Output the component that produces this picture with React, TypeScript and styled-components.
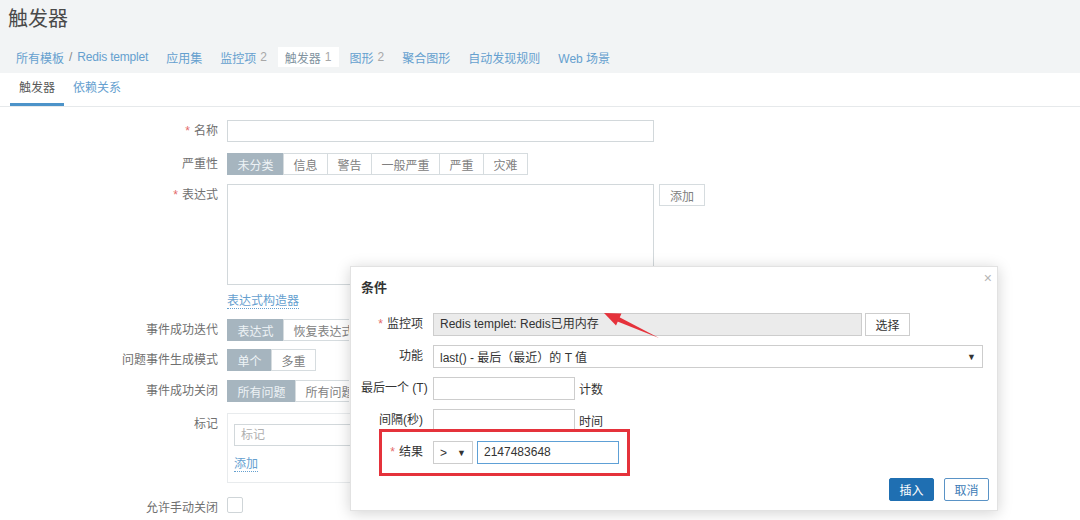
import React from 'react'
import styled, { createGlobalStyle } from 'styled-components'

const GlobalStyle = createGlobalStyle`
  html, body {
    margin: 0;
    padding: 0;
    background: #fff;
  }
  body {
    font-family: "Liberation Sans", "Noto Sans CJK SC", sans-serif;
    font-size: 12px;
    color: #707070;
  }
  * {
    box-sizing: border-box;
  }
`

const Page = styled.div`
  position: relative;
  width: 1080px;
  height: 520px;
  overflow: hidden;
  background: #fff;
`

const Header = styled.div`
  background: #f2f4f5;
`

const Title = styled.h1`
  margin: 0;
  height: 40px;
  padding-left: 8px;
  line-height: 38px;
  font-size: 20px;
  font-weight: normal;
  color: #4a4a4a;
`

const Nav = styled.div`
  display: flex;
  align-items: center;
  gap: 4px;
  padding: 7px 0 6px 9px;
`

const NavItem = styled.a<{ $active?: boolean }>`
  display: flex;
  align-items: center;
  height: 20px;
  padding: 0 7px;
  color: ${(p) => (p.$active ? '#8193a0' : '#65a0cf')};
  background: ${(p) => (p.$active ? '#fff' : 'transparent')};
  white-space: nowrap;
`

const Crumb = styled.span`
  letter-spacing: -0.2px;
`

const Count = styled.span`
  margin-left: 4px;
  color: #a8a8a8;
`

const Slash = styled.span`
  margin: 0 5px;
  color: #888;
`

const Tabs = styled.div`
  display: flex;
  padding-left: 10px;
  border-bottom: 1px solid #e6e9eb;
`

const Tab = styled.a<{ $active?: boolean }>`
  padding: 0 9px;
  line-height: 30px;
  border-bottom: 3px solid ${(p) => (p.$active ? '#4c93c9' : 'transparent')};
  color: ${(p) => (p.$active ? '#5a5a5a' : '#65a0cf')};
`

const Form = styled.div`
  padding-top: 13px;
`

const Row = styled.div<{ $mt?: number }>`
  display: grid;
  grid-template-columns: 218px auto;
  column-gap: 9px;
  align-items: start;
  margin-top: ${(p) => p.$mt ?? 0}px;
`

const Label = styled.div`
  text-align: right;
  line-height: 22px;
  color: #707070;
  white-space: nowrap;
`

const Req = styled.span`
  color: #e46a6a;
  margin-right: 4px;
`

const Field = styled.div`
  display: flex;
  align-items: flex-start;
  gap: 5px;
`

const TextInput = styled.div<{ $w: number; $h?: number }>`
  width: ${(p) => p.$w}px;
  height: ${(p) => p.$h ?? 22}px;
  border: 1px solid #d2d8db;
  background: #fff;
  padding: 0 6px;
  line-height: 20px;
  color: #b0b0b0;
`

const Seg = styled.div<{ $clip?: number }>`
  display: flex;
  height: 22px;
  max-width: ${(p) => (p.$clip ? `${p.$clip}px` : 'none')};
  overflow: hidden;
`

const SegBtn = styled.div<{ $on?: boolean }>`
  display: flex;
  align-items: center;
  flex-shrink: 0;
  padding: 0 9.5px;
  margin-left: -1px;
  border: 1px solid ${(p) => (p.$on ? '#a6b5bf' : '#d6dcdf')};
  background: ${(p) => (p.$on ? '#a6b5bf' : '#fff')};
  color: ${(p) => (p.$on ? '#eef3f6' : '#808080')};
  white-space: nowrap;
  &:first-child {
    margin-left: 0;
  }
`

const PlainBtn = styled.div`
  display: flex;
  align-items: center;
  height: 22px;
  padding: 0 10px;
  border: 1px solid #d6dcdf;
  background: #fff;
  color: #808080;
`

const Link = styled.a`
  color: #65a0cf;
  line-height: 14px;
  border-bottom: 1px dotted #65a0cf;
`

const LinkRow = styled.div`
  display: flex;
`

const TagBox = styled.div`
  width: 420px;
  height: 70px;
  border: 1px solid #e8ebed;
  padding: 10px 6px;
  display: flex;
  flex-direction: column;
  align-items: flex-start;
  gap: 11px;
`

const Checkbox = styled.div`
  width: 16px;
  height: 16px;
  border: 1px solid #cfd5d8;
  border-radius: 2px;
  background: #fff;
`

/* modal */

const Modal = styled.div`
  position: absolute;
  left: 350px;
  top: 266px;
  width: 648px;
  height: 245px;
  background: #fff;
  border: 1px solid #e2e2e2;
  box-shadow: 0 2px 14px rgba(0, 0, 0, 0.18);
  padding: 0 8px 0 10px;
  color: #333;
`

const ModalHead = styled.div`
  height: 46px;
  padding-top: 13px;
  font-size: 13px;
  font-weight: bold;
  line-height: 16px;
  color: #333;
`

const Close = styled.span`
  position: absolute;
  right: 5px;
  top: 3px;
  font-size: 14px;
  color: #b5b5b5;
`

const MRows = styled.div`
  display: flex;
  flex-direction: column;
  gap: 9px;
`

const MRow = styled.div`
  display: grid;
  grid-template-columns: 62px auto;
  column-gap: 10px;
  align-items: center;
`

const MLabel = styled.div`
  text-align: right;
  line-height: 23px;
  color: #333;
  white-space: nowrap;
`

const MField = styled.div<{ $gap?: number }>`
  display: flex;
  align-items: center;
  gap: ${(p) => p.$gap ?? 4}px;
`

const MInput = styled.div<{ $w: number; $ro?: boolean; $focus?: boolean }>`
  width: ${(p) => p.$w}px;
  height: 23px;
  padding: 0 6px;
  line-height: 21px;
  border: 1px solid ${(p) => (p.$focus ? '#5ea0d6' : '#cdcdcd')};
  background: ${(p) => (p.$ro ? '#ebebeb' : '#fff')};
  color: #333;
  white-space: nowrap;
`

const MSelect = styled.div<{ $w: number }>`
  width: ${(p) => p.$w}px;
  height: 23px;
  padding: 0 6px;
  display: flex;
  align-items: center;
  justify-content: space-between;
  border: 1px solid #cdcdcd;
  background: #fff;
  color: #333;
  white-space: nowrap;
`

const Caret = styled.span`
  font-size: 9px;
  color: #333;
`

const MBtn = styled.div<{ $primary?: boolean }>`
  display: flex;
  align-items: center;
  justify-content: center;
  width: 45px;
  height: 23px;
  border: 1px solid ${(p) => (p.$primary ? '#1f6fb2' : '#5a93c6')};
  border-radius: 2px;
  background: ${(p) => (p.$primary ? '#1f6fb2' : '#fff')};
  color: ${(p) => (p.$primary ? '#fff' : '#3e7cb6')};
`

const GrayBtn = styled.div`
  display: flex;
  align-items: center;
  justify-content: center;
  width: 45px;
  height: 23px;
  border: 1px solid #cdcdcd;
  background: #fff;
  color: #333;
`

const Suffix = styled.span`
  color: #333;
`

const Footer = styled.div`
  display: flex;
  justify-content: flex-end;
  gap: 10px;
  margin-top: 14px;
`

const Highlight = styled.div`
  position: absolute;
  left: 28px;
  top: 162px;
  width: 251px;
  height: 47px;
  border: 3px solid #e5323b;
  pointer-events: none;
`

const Arrow = styled.svg`
  position: absolute;
  left: 245px;
  top: 40px;
`

const navItems = [
  { t: '应用集' },
  { t: '监控项', n: 2 },
  { t: '触发器', n: 1, active: true },
  { t: '图形', n: 2 },
  { t: '聚合图形' },
  { t: '自动发现规则' },
  { t: 'Web 场景' },
]

const severities = ['未分类', '信息', '警告', '一般严重', '严重', '灾难']

export default function App() {
  return (
    <Page>
      <GlobalStyle />
      <Header>
        <Title>触发器</Title>
        <Nav>
          <NavItem>
            所有模板<Slash>/</Slash>
            <Crumb>Redis templet</Crumb>
          </NavItem>
          {navItems.map((it) => (
            <NavItem key={it.t} $active={it.active}>
              {it.t}
              {it.n !== undefined && <Count>{it.n}</Count>}
            </NavItem>
          ))}
        </Nav>
      </Header>
      <Tabs>
        <Tab $active>触发器</Tab>
        <Tab>依赖关系</Tab>
      </Tabs>

      <Form>
        <Row>
          <Label>
            <Req>*</Req>名称
          </Label>
          <TextInput $w={427} />
        </Row>
        <Row $mt={11}>
          <Label>严重性</Label>
          <Seg>
            {severities.map((s, i) => (
              <SegBtn key={s} $on={i === 0}>
                {s}
              </SegBtn>
            ))}
          </Seg>
        </Row>
        <Row $mt={9}>
          <Label>
            <Req>*</Req>表达式
          </Label>
          <Field>
            <TextInput $w={427} $h={101} />
            <PlainBtn>添加</PlainBtn>
          </Field>
        </Row>
        <Row $mt={9}>
          <div />
          <LinkRow>
            <Link>表达式构造器</Link>
          </LinkRow>
        </Row>
        <Row $mt={10}>
          <Label>事件成功迭代</Label>
          <Seg $clip={122}>
            <SegBtn $on>表达式</SegBtn>
            <SegBtn>恢复表达式</SegBtn>
          </Seg>
        </Row>
        <Row $mt={8}>
          <Label>问题事件生成模式</Label>
          <Seg>
            <SegBtn $on>单个</SegBtn>
            <SegBtn>多重</SegBtn>
          </Seg>
        </Row>
        <Row $mt={9}>
          <Label>事件成功关闭</Label>
          <Seg $clip={122}>
            <SegBtn $on>所有问题</SegBtn>
            <SegBtn>所有问题</SegBtn>
          </Seg>
        </Row>
        <Row $mt={11}>
          <Label>标记</Label>
          <TagBox>
            <TextInput $w={300}>标记</TextInput>
            <Link>添加</Link>
          </TagBox>
        </Row>
        <Row $mt={14}>
          <Label>允许手动关闭</Label>
          <Field>
            <Checkbox />
          </Field>
        </Row>
      </Form>

      <Modal>
        <Close>×</Close>
        <ModalHead>条件</ModalHead>
        <MRows>
          <MRow>
            <MLabel>
              <Req>*</Req>监控项
            </MLabel>
            <MField $gap={3}>
              <MInput $w={429} $ro>
                Redis templet: Redis已用内存
              </MInput>
              <GrayBtn>选择</GrayBtn>
            </MField>
          </MRow>
          <MRow>
            <MLabel>功能</MLabel>
            <MField>
              <MSelect $w={550}>
                last() - 最后（最近）的 T 值<Caret>▼</Caret>
              </MSelect>
            </MField>
          </MRow>
          <MRow>
            <MLabel>最后一个 (T)</MLabel>
            <MField>
              <MInput $w={142} />
              <Suffix>计数</Suffix>
            </MField>
          </MRow>
          <MRow>
            <MLabel>间隔(秒)</MLabel>
            <MField>
              <MInput $w={142} />
              <Suffix>时间</Suffix>
            </MField>
          </MRow>
          <MRow>
            <MLabel>
              <Req>*</Req>结果
            </MLabel>
            <MField>
              <MSelect $w={40}>
                &gt;<Caret>▼</Caret>
              </MSelect>
              <MInput $w={142} $focus>
                2147483648
              </MInput>
            </MField>
          </MRow>
        </MRows>
        <Footer>
          <MBtn $primary>插入</MBtn>
          <MBtn>取消</MBtn>
        </Footer>

        <Highlight />
        <Arrow width="70" height="40" viewBox="0 0 70 40">
          <polygon points="8,6 25.5,6.5 20,18.5" fill="#e5323b" />
          <polygon points="23,10 21.5,14.5 63,31" fill="#e5323b" />
        </Arrow>
      </Modal>
    </Page>
  )
}
